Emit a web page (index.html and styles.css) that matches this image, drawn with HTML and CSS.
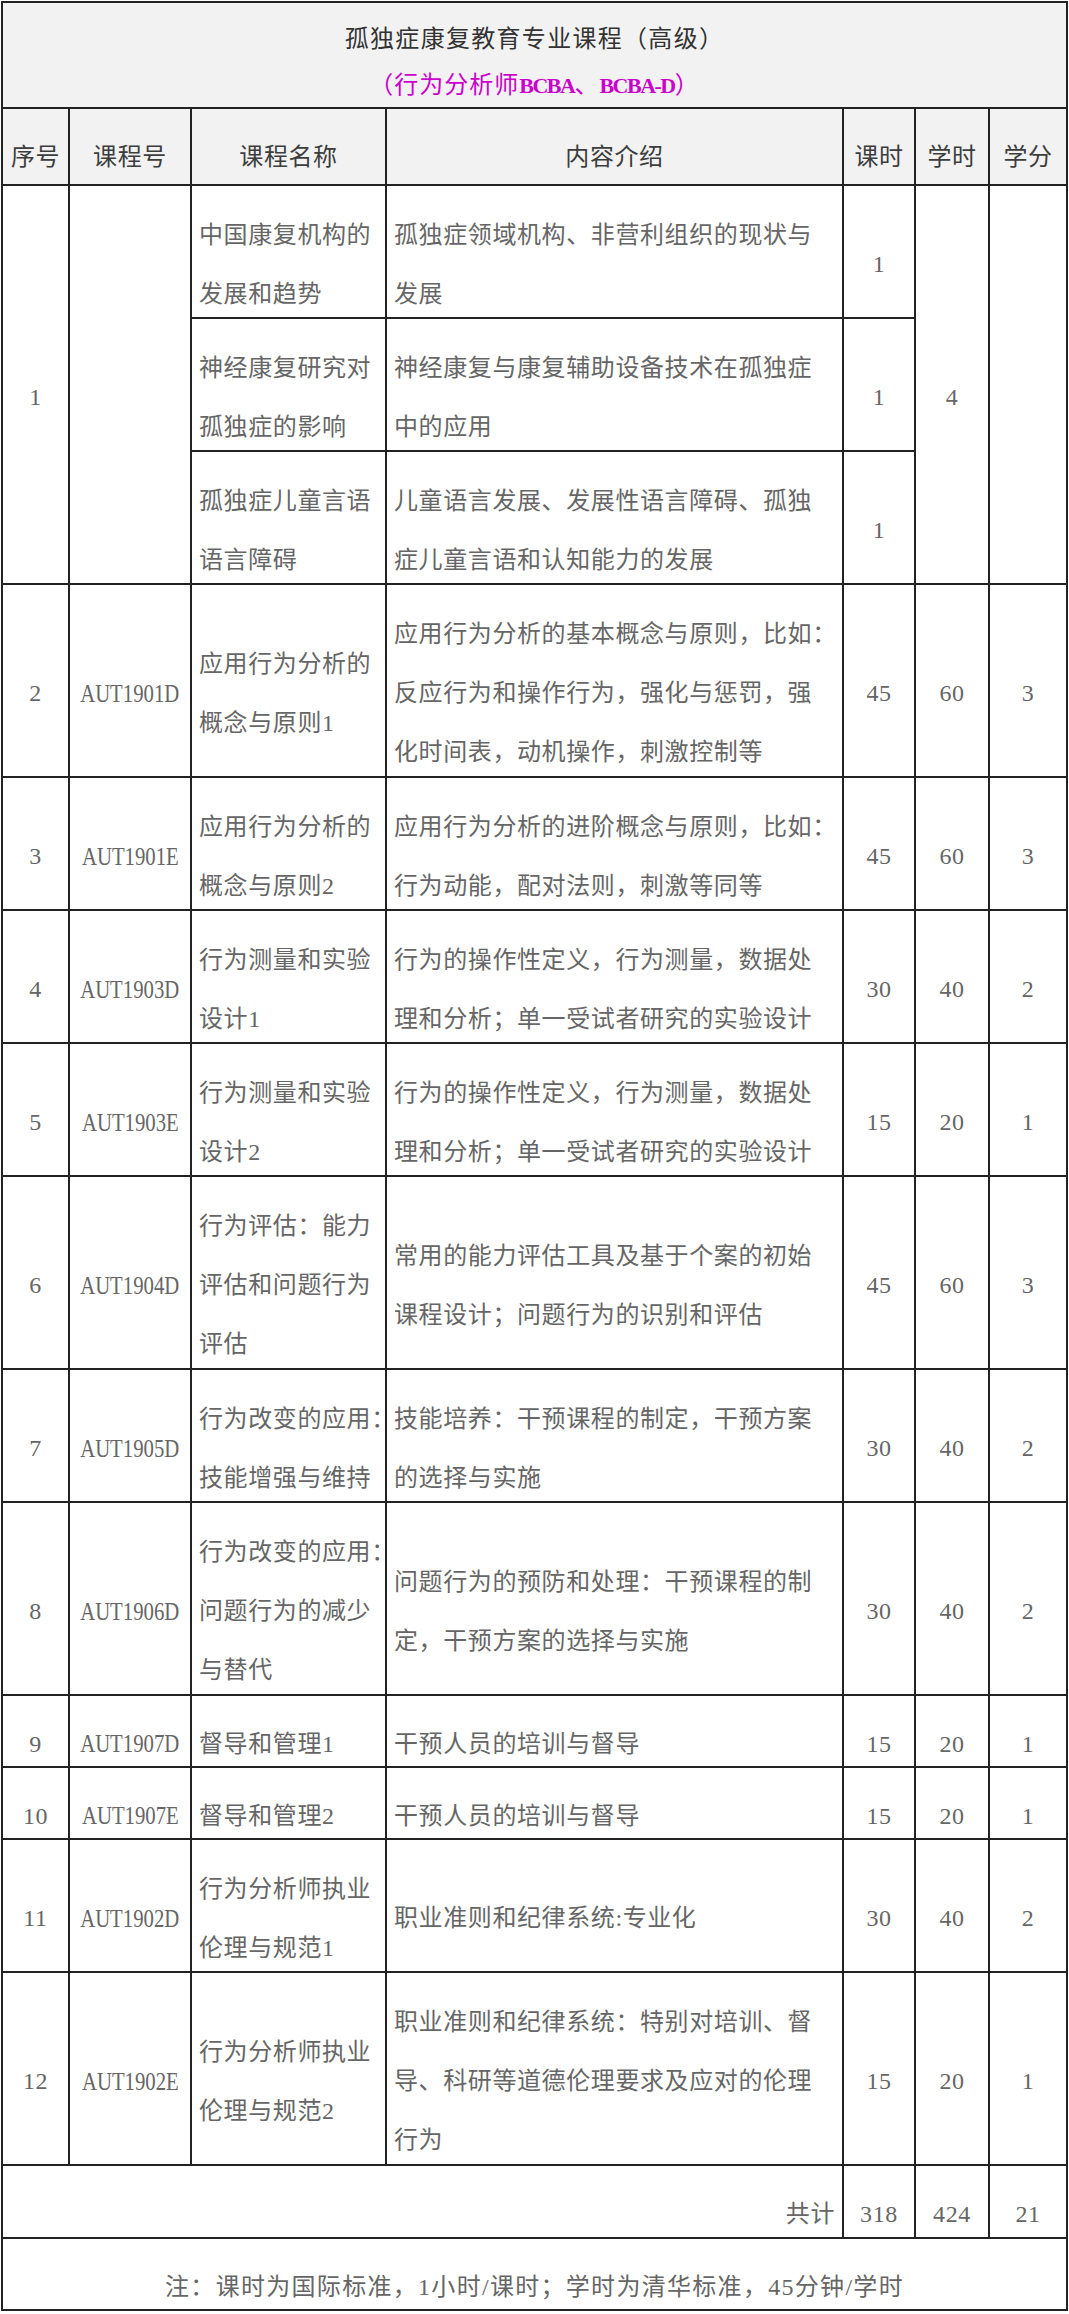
FILE: index.html
```html
<!DOCTYPE html>
<html lang="zh-CN">
<head>
<meta charset="utf-8">
<title>孤独症康复教育专业课程（高级）</title>
<link rel="stylesheet" href="styles.css">
</head>
<body>
<table class="course">
  <colgroup>
    <col class="c-no"><col class="c-code"><col class="c-name"><col class="c-desc"><col class="c-hr"><col class="c-sh"><col class="c-cr">
  </colgroup>
  <tr class="row-title">
    <td colspan="7" class="title">
      <div class="title-main">孤独症康复教育专业课程（高级）</div>
      <div class="title-sub">（行为分析师<span class="lat">BCBA</span>、<span class="lat">BCBA-D</span>）</div>
    </td>
  </tr>
  <tr class="row-head">
    <th><div class="th">序号</div></th>
    <th><div class="th">课程号</div></th>
    <th><div class="th">课程名称</div></th>
    <th><div class="th">内容介绍</div></th>
    <th><div class="th">课时</div></th>
    <th><div class="th">学时</div></th>
    <th><div class="th">学分</div></th>
  </tr>

  <tr class="h2">
    <td rowspan="3" class="c"><div class="t">1</div></td>
    <td rowspan="3"></td>
    <td><div class="t">中国康复机构的<br>发展和趋势</div></td>
    <td><div class="t">孤独症领域机构、非营利组织的现状与<br>发展</div></td>
    <td class="c"><div class="t">1</div></td>
    <td rowspan="3" class="c"><div class="t">4</div></td>
    <td rowspan="3"></td>
  </tr>
  <tr class="h2">
    <td><div class="t">神经康复研究对<br>孤独症的影响</div></td>
    <td><div class="t">神经康复与康复辅助设备技术在孤独症<br>中的应用</div></td>
    <td class="c"><div class="t">1</div></td>
  </tr>
  <tr class="h2">
    <td><div class="t">孤独症儿童言语<br>语言障碍</div></td>
    <td><div class="t">儿童语言发展、发展性语言障碍、孤独<br>症儿童言语和认知能力的发展</div></td>
    <td class="c"><div class="t">1</div></td>
  </tr>

  <tr class="h3">
    <td class="c"><div class="t">2</div></td>
    <td class="c code-cell"><div class="t"><span class="code">AUT1901D</span></div></td>
    <td><div class="t">应用行为分析的<br>概念与原则1</div></td>
    <td><div class="t">应用行为分析的基本概念与原则，比如：<br>反应行为和操作行为，强化与惩罚，强<br>化时间表，动机操作，刺激控制等</div></td>
    <td class="c"><div class="t">45</div></td>
    <td class="c"><div class="t">60</div></td>
    <td class="c"><div class="t">3</div></td>
  </tr>
  <tr class="h2">
    <td class="c"><div class="t">3</div></td>
    <td class="c code-cell"><div class="t"><span class="code">AUT1901E</span></div></td>
    <td><div class="t">应用行为分析的<br>概念与原则2</div></td>
    <td><div class="t">应用行为分析的进阶概念与原则，比如：<br>行为动能，配对法则，刺激等同等</div></td>
    <td class="c"><div class="t">45</div></td>
    <td class="c"><div class="t">60</div></td>
    <td class="c"><div class="t">3</div></td>
  </tr>
  <tr class="h2">
    <td class="c"><div class="t">4</div></td>
    <td class="c code-cell"><div class="t"><span class="code">AUT1903D</span></div></td>
    <td><div class="t">行为测量和实验<br>设计1</div></td>
    <td><div class="t">行为的操作性定义，行为测量，数据处<br>理和分析；单一受试者研究的实验设计</div></td>
    <td class="c"><div class="t">30</div></td>
    <td class="c"><div class="t">40</div></td>
    <td class="c"><div class="t">2</div></td>
  </tr>
  <tr class="h2">
    <td class="c"><div class="t">5</div></td>
    <td class="c code-cell"><div class="t"><span class="code">AUT1903E</span></div></td>
    <td><div class="t">行为测量和实验<br>设计2</div></td>
    <td><div class="t">行为的操作性定义，行为测量，数据处<br>理和分析；单一受试者研究的实验设计</div></td>
    <td class="c"><div class="t">15</div></td>
    <td class="c"><div class="t">20</div></td>
    <td class="c"><div class="t">1</div></td>
  </tr>
  <tr class="h3">
    <td class="c"><div class="t">6</div></td>
    <td class="c code-cell"><div class="t"><span class="code">AUT1904D</span></div></td>
    <td><div class="t">行为评估：能力<br>评估和问题行为<br>评估</div></td>
    <td><div class="t">常用的能力评估工具及基于个案的初始<br>课程设计；问题行为的识别和评估</div></td>
    <td class="c"><div class="t">45</div></td>
    <td class="c"><div class="t">60</div></td>
    <td class="c"><div class="t">3</div></td>
  </tr>
  <tr class="h2">
    <td class="c"><div class="t">7</div></td>
    <td class="c code-cell"><div class="t"><span class="code">AUT1905D</span></div></td>
    <td><div class="t">行为改变的应用：<br>技能增强与维持</div></td>
    <td><div class="t">技能培养：干预课程的制定，干预方案<br>的选择与实施</div></td>
    <td class="c"><div class="t">30</div></td>
    <td class="c"><div class="t">40</div></td>
    <td class="c"><div class="t">2</div></td>
  </tr>
  <tr class="h3">
    <td class="c"><div class="t">8</div></td>
    <td class="c code-cell"><div class="t"><span class="code">AUT1906D</span></div></td>
    <td><div class="t">行为改变的应用：<br>问题行为的减少<br>与替代</div></td>
    <td><div class="t">问题行为的预防和处理：干预课程的制<br>定，干预方案的选择与实施</div></td>
    <td class="c"><div class="t">30</div></td>
    <td class="c"><div class="t">40</div></td>
    <td class="c"><div class="t">2</div></td>
  </tr>
  <tr class="h1">
    <td class="c"><div class="t">9</div></td>
    <td class="c code-cell"><div class="t"><span class="code">AUT1907D</span></div></td>
    <td><div class="t">督导和管理1</div></td>
    <td><div class="t">干预人员的培训与督导</div></td>
    <td class="c"><div class="t">15</div></td>
    <td class="c"><div class="t">20</div></td>
    <td class="c"><div class="t">1</div></td>
  </tr>
  <tr class="h1">
    <td class="c"><div class="t">10</div></td>
    <td class="c code-cell"><div class="t"><span class="code">AUT1907E</span></div></td>
    <td><div class="t">督导和管理2</div></td>
    <td><div class="t">干预人员的培训与督导</div></td>
    <td class="c"><div class="t">15</div></td>
    <td class="c"><div class="t">20</div></td>
    <td class="c"><div class="t">1</div></td>
  </tr>
  <tr class="h2">
    <td class="c"><div class="t">11</div></td>
    <td class="c code-cell"><div class="t"><span class="code">AUT1902D</span></div></td>
    <td><div class="t">行为分析师执业<br>伦理与规范1</div></td>
    <td><div class="t">职业准则和纪律系统:专业化</div></td>
    <td class="c"><div class="t">30</div></td>
    <td class="c"><div class="t">40</div></td>
    <td class="c"><div class="t">2</div></td>
  </tr>
  <tr class="h3">
    <td class="c"><div class="t">12</div></td>
    <td class="c code-cell"><div class="t"><span class="code">AUT1902E</span></div></td>
    <td><div class="t">行为分析师执业<br>伦理与规范2</div></td>
    <td><div class="t">职业准则和纪律系统：特别对培训、督<br>导、科研等道德伦理要求及应对的伦理<br>行为</div></td>
    <td class="c"><div class="t">15</div></td>
    <td class="c"><div class="t">20</div></td>
    <td class="c"><div class="t">1</div></td>
  </tr>

  <tr class="h-total">
    <td colspan="4" class="r"><div class="t">共计</div></td>
    <td class="c"><div class="t">318</div></td>
    <td class="c"><div class="t">424</div></td>
    <td class="c"><div class="t">21</div></td>
  </tr>
  <tr class="h1">
    <td colspan="7" class="c"><div class="t note">注：课时为国际标准，1小时/课时；学时为清华标准，45分钟/学时</div></td>
  </tr>
</table>
</body>
</html>
```

FILE: styles.css
```css
html, body {
  margin: 0;
  padding: 0;
  background: #ffffff;
}

.course {
  border-collapse: collapse;
  table-layout: fixed;
  width: 1067px;
  margin: 1px 0 0 1px;
  font-family: "Liberation Serif", "Noto Sans CJK SC", serif;
  font-size: 24px;
  letter-spacing: 0.6px;
  color: #666666;
}

.c-no { width: 67px; }
.c-code { width: 122px; }
.c-name { width: 195px; }
.c-desc { width: 457px; }
.c-hr { width: 72px; }
.c-sh { width: 74px; }
.c-cr { width: 78px; }

.course td,
.course th {
  border: 2px solid #222222;
  padding: 0 7px;
  vertical-align: middle;
  line-height: 59px;
  white-space: nowrap;
  font-weight: normal;
  text-align: left;
}

/* text sits low in each line, as in the source document */
.t {
  margin: 13px 0 -13px;
}

.course td.c { text-align: center; }
.course td.r { text-align: right; }
.course td.code-cell { padding: 0; }

.code {
  display: inline-block;
  font-size: 25px;
  letter-spacing: 0;
  transform: scaleX(0.83);
}

.note {
  letter-spacing: 1.3px;
}

/* title */
.row-title { height: 106px; }
.course td.title {
  background: #f2f2f2;
  vertical-align: top;
  text-align: center;
  padding-top: 14px;
  line-height: 45px;
}
.title-main {
  color: #333333;
  letter-spacing: 1.3px;
}
.title-sub {
  color: #cc00cc;
  letter-spacing: 1px;
  margin: 1px 0 -1px;
}
.lat {
  font-weight: bold;
  font-size: 22px;
  letter-spacing: -1.5px;
}

/* header */
.row-head { height: 77px; }
.course th {
  background: #f2f2f2;
  color: #3d3d3d;
  text-align: center;
}
.th {
  margin: 11px 0 -11px;
}

/* row heights */
.h1 { height: 72px; }
.h2 { height: 133px; }
.h3 { height: 193px; }
.h-total { height: 73px; }
```
